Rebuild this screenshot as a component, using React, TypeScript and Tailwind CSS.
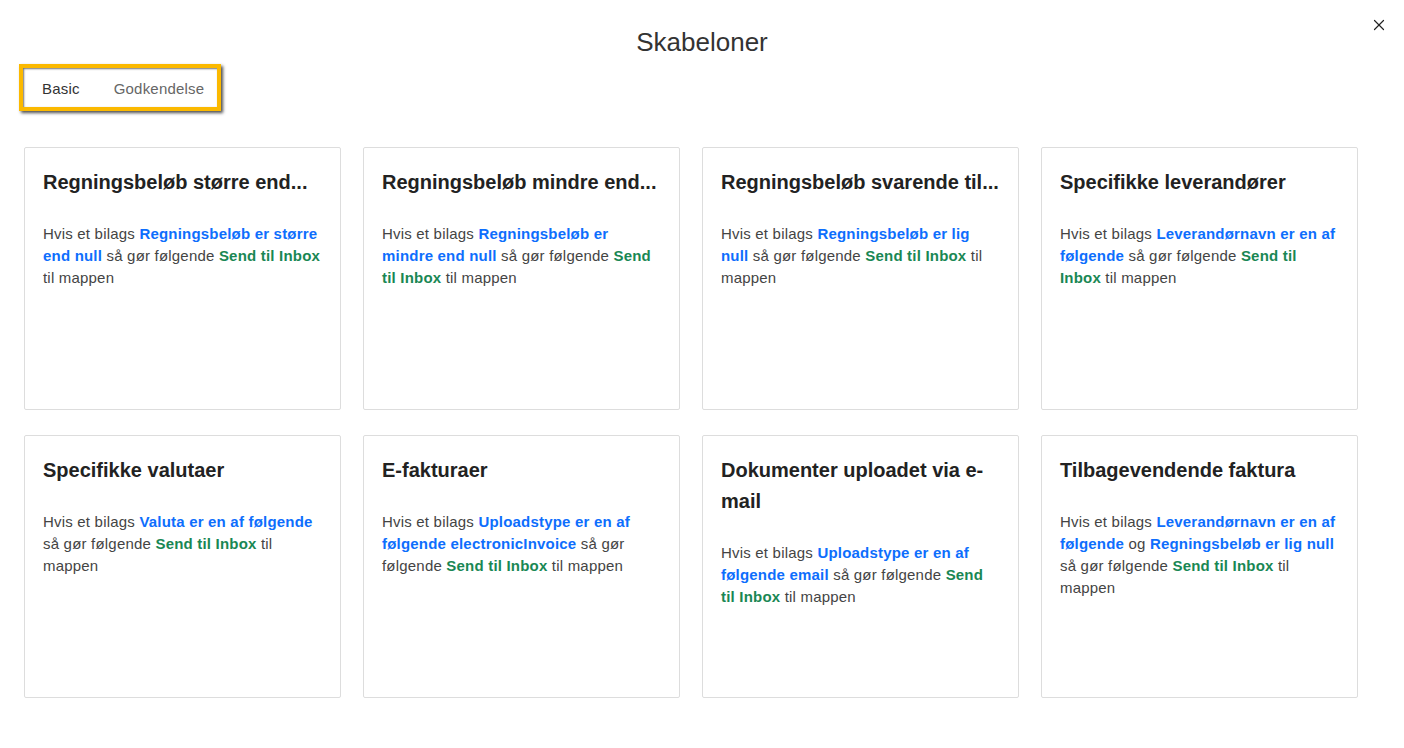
import { X } from 'lucide-react';

type Part = { t: string; k?: 'b' | 'g' };

const cards: { title: string; body: Part[] }[] = [
  {
    title: 'Regningsbeløb større end...',
    body: [
      { t: 'Hvis et bilags ' },
      { t: 'Regningsbeløb er større end null', k: 'b' },
      { t: ' så gør følgende ' },
      { t: 'Send til Inbox', k: 'g' },
      { t: ' til mappen' },
    ],
  },
  {
    title: 'Regningsbeløb mindre end...',
    body: [
      { t: 'Hvis et bilags ' },
      { t: 'Regningsbeløb er mindre end null', k: 'b' },
      { t: ' så gør følgende ' },
      { t: 'Send til Inbox', k: 'g' },
      { t: ' til mappen' },
    ],
  },
  {
    title: 'Regningsbeløb svarende til...',
    body: [
      { t: 'Hvis et bilags ' },
      { t: 'Regningsbeløb er lig null', k: 'b' },
      { t: ' så gør følgende ' },
      { t: 'Send til Inbox', k: 'g' },
      { t: ' til mappen' },
    ],
  },
  {
    title: 'Specifikke leverandører',
    body: [
      { t: 'Hvis et bilags ' },
      { t: 'Leverandørnavn er en af følgende', k: 'b' },
      { t: ' så gør følgende ' },
      { t: 'Send til Inbox', k: 'g' },
      { t: ' til mappen' },
    ],
  },
  {
    title: 'Specifikke valutaer',
    body: [
      { t: 'Hvis et bilags ' },
      { t: 'Valuta er en af følgende', k: 'b' },
      { t: ' så gør følgende ' },
      { t: 'Send til Inbox', k: 'g' },
      { t: ' til mappen' },
    ],
  },
  {
    title: 'E-fakturaer',
    body: [
      { t: 'Hvis et bilags ' },
      { t: 'Uploadstype er en af følgende electronicInvoice', k: 'b' },
      { t: ' så gør følgende ' },
      { t: 'Send til Inbox', k: 'g' },
      { t: ' til mappen' },
    ],
  },
  {
    title: 'Dokumenter uploadet via e-mail',
    body: [
      { t: 'Hvis et bilags ' },
      { t: 'Uploadstype er en af følgende email', k: 'b' },
      { t: ' så gør følgende ' },
      { t: 'Send til Inbox', k: 'g' },
      { t: ' til mappen' },
    ],
  },
  {
    title: 'Tilbagevendende faktura',
    body: [
      { t: 'Hvis et bilags ' },
      { t: 'Leverandørnavn er en af følgende', k: 'b' },
      { t: ' og ' },
      { t: 'Regningsbeløb er lig null', k: 'b' },
      { t: ' så gør følgende ' },
      { t: 'Send til Inbox', k: 'g' },
      { t: ' til mappen' },
    ],
  },
];

export default function App() {
  return (
    <div className="relative min-h-screen w-full bg-white text-[#333] font-['Liberation_Sans',Arial,sans-serif]">
      <button className="absolute right-[16px] top-[16px] text-[#222]">
        <X size={18} strokeWidth={1.6} />
      </button>

      <h1 className="pt-[26px] text-center text-[26px] leading-[32px] text-[#333]">Skabeloner</h1>

      {/* tab switcher */}
      <div className="ml-[19px] mt-[6px] inline-flex h-[47px] items-center gap-[34px] border-4 border-[#fbb900] bg-white pl-[19px] pr-[13px] pt-[3px] text-[15px] tracking-[0.2px] shadow-[2px_2px_3px_rgba(0,0,0,0.7),inset_1px_1px_2px_rgba(0,0,0,0.55)]">
        <span className="text-[#333]">Basic</span>
        <span className="text-[#666]">Godkendelse</span>
      </div>

      <div className="ml-[24px] mt-[36px] grid w-[1334px] grid-cols-4 gap-x-[22px] gap-y-[25px]">
        {cards.map((c, i) => (
          <div key={i} className="h-[263px] rounded-[2px] border border-[#ddd] bg-white px-[18px] pt-[19px]">
            <h3 className="text-[20px] font-bold leading-[31px] text-[#222]">{c.title}</h3>
            <p className="mt-[25px] text-[15px] leading-[22px] tracking-[0.2px] text-[#444]">
              {c.body.map((p, j) =>
                p.k === 'b' ? (
                  <span key={j} className="font-bold text-[#0d6efd]">{p.t}</span>
                ) : p.k === 'g' ? (
                  <span key={j} className="font-bold text-[#198754]">{p.t}</span>
                ) : (
                  <span key={j}>{p.t}</span>
                )
              )}
            </p>
          </div>
        ))}
      </div>
    </div>
  );
}
